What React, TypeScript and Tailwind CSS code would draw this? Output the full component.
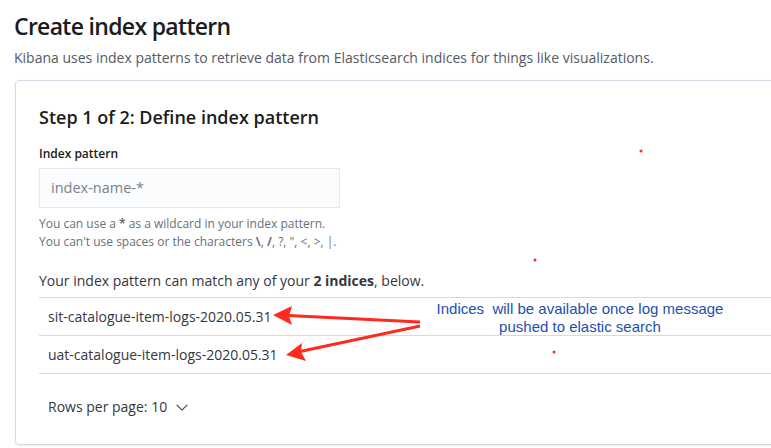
import React from "react";

const indices = ["sit-catalogue-item-logs-2020.05.31", "uat-catalogue-item-logs-2020.05.31"];

export default function App() {
  return (
    <div className="relative h-[448px] w-[771px] overflow-hidden bg-white font-['Open_Sans',sans-serif] text-[#1a1c21]">
      <div className="px-[14px] pt-[8px]">
        <h1 className="text-[23px] font-semibold leading-[36px] tracking-[-0.03em] text-[#1a1c21]">Create index pattern</h1>
        <p className="mt-[4px] text-[14px] leading-[20px] text-[#535966]">
          Kibana uses index patterns to retrieve data from Elasticsearch indices for things like visualizations.
        </p>
      </div>

      <div className="ml-[15px] mt-[12px] h-[365px] w-[800px] rounded-[4px] border border-[#d3dae6] shadow-[0_1px_2px_rgba(0,0,0,0.08)]">
        <div className="pl-[23px] pt-[24px]">
          <h2 className="text-[18px] font-semibold leading-[24px] text-[#1a1c21]">Step 1 of 2: Define index pattern</h2>

          <div className="mt-[16px] text-[12px] font-semibold leading-[18px] text-[#1a1c21]">Index pattern</div>
          <div className="mt-[5px] flex h-[40px] w-[301px] items-center border border-[#e4e8ef] bg-[#fbfcfd] px-[11px] text-[14.5px] text-[#7b818c]">
            index-name-*
          </div>

          <div className="mt-[7px] text-[12px] leading-[18px] text-[#69707d]">
            <div>
              You can use a <span className="font-bold">*</span> as a wildcard in your index pattern.
            </div>
            <div>
              You can't use spaces or the characters <span className="font-bold">\</span>, <span className="font-bold">/</span>, ?, ", &lt;, &gt;, |.
            </div>
          </div>

          <p className="mt-[20px] text-[14px] leading-[20px] text-[#343741]">
            Your index pattern can match any of your <span className="font-bold">2 indices</span>, below.
          </p>

          <div className="mt-[6px] border-t border-[#d3dae6]">
            {indices.map((name) => (
              <div key={name} className="flex h-[38px] items-center border-b border-[#d3dae6] pl-[9px] text-[14px] text-[#343741]">
                {name}
              </div>
            ))}
          </div>

          <div className="mt-[22px] flex items-center gap-[8px] pl-[9px] text-[14px] text-[#343741]">
            <span>Rows per page: 10</span>
            <svg width="14" height="14" viewBox="0 0 16 16" fill="none" stroke="#343741" strokeWidth="1.2">
              <path d="M2 5.5l6 6 6-6" />
            </svg>
          </div>
        </div>
      </div>

      {/* annotation overlay */}
      <svg className="pointer-events-none absolute left-0 top-0" width="771" height="448">
        <line x1="420" y1="322" x2="288" y2="315.5" stroke="#ff2a1f" strokeWidth="3" />
        <polygon points="273,315 292,306 289,316 292,325" fill="#ff2a1f" />
        <line x1="420" y1="326" x2="300" y2="351.5" stroke="#ff2a1f" strokeWidth="3" />
        <polygon points="286,355 302,343 301,352 306,361" fill="#ff2a1f" />
        <circle cx="641" cy="151" r="1.5" fill="#ff2a1f" />
        <circle cx="535" cy="260" r="1.5" fill="#ff2a1f" />
        <circle cx="554" cy="352" r="1.5" fill="#ff2a1f" />
      </svg>
      <div className="absolute left-[380px] top-[300px] w-[400px] text-center font-['Liberation_Sans',Arial,sans-serif] text-[15px] leading-[18px] text-[#1c4fb0]">
        <div>Indices&nbsp; will be available once log message</div>
        <div>pushed to elastic search</div>
      </div>
    </div>
  );
}
